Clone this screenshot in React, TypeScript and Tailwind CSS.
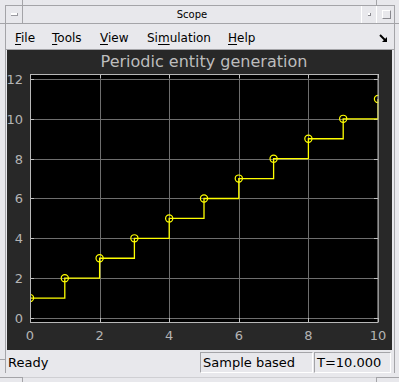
import React from "react";

const X = (v: number) => 23 + 34.8 * v;
const Y = (v: number) => 244 - 19.917 * v;

function Chart() {
  const xs = [0, 2, 4, 6, 8, 10];
  const ys = [0, 2, 4, 6, 8, 10, 12];
  let d = `M ${X(0)} ${Y(1)}`;
  for (let k = 1; k <= 10; k++) {
    d += ` H ${X(k)} V ${Y(k + 1)}`;
  }
  const pts = Array.from({ length: 11 }, (_, k) => k);
  return (
    <svg width={385} height={276} className="block" style={{ fontFamily: "'DejaVu Sans', sans-serif" }}>
      <defs>
        <clipPath id="ax">
          <rect x={23.5} y={0.5} width={348} height={248} />
        </clipPath>
      </defs>
      <rect x={23.5} y={0.5} width={348} height={248} fill="#000" />
      {xs.map((v) => (
        <line key={"gx" + v} x1={Math.round(X(v)) + 0.5} x2={Math.round(X(v)) + 0.5} y1={0} y2={248} stroke="#6e6e6e" strokeWidth={1} />
      ))}
      {ys.map((v) => (
        <line key={"gy" + v} x1={23} x2={371} y1={Math.round(Y(v)) + 0.5} y2={Math.round(Y(v)) + 0.5} stroke="#6e6e6e" strokeWidth={1} />
      ))}
      {ys.map((v) => (
        <g key={"ty" + v}>
          <line x1={23} x2={27} y1={Math.round(Y(v)) + 0.5} y2={Math.round(Y(v)) + 0.5} stroke="#c0c0c0" />
          <line x1={367} x2={371} y1={Math.round(Y(v)) + 0.5} y2={Math.round(Y(v)) + 0.5} stroke="#c0c0c0" />
        </g>
      ))}
      {xs.map((v) => (
        <g key={"tx" + v}>
          <line x1={Math.round(X(v)) + 0.5} x2={Math.round(X(v)) + 0.5} y1={244} y2={248} stroke="#c0c0c0" />
          <line x1={Math.round(X(v)) + 0.5} x2={Math.round(X(v)) + 0.5} y1={0} y2={4} stroke="#c0c0c0" />
        </g>
      ))}
      <g clipPath="url(#ax)">
        <path d={d} fill="none" stroke="#ffff00" strokeWidth={1.3} />
        {pts.map((k) => (
          <circle key={k} cx={X(k)} cy={Y(k + 1)} r={3.6} fill="none" stroke="#ffff00" strokeWidth={1.2} />
        ))}
      </g>
      <rect x={23.5} y={0.5} width={347.5} height={248} fill="none" stroke="#b8b8b8" strokeWidth={1} />
      {ys.map((v) => (
        <text key={"ly" + v} x={16} y={Y(v) + 5} textAnchor="end" fontSize={13} fill="#b4b4b4">
          {v}
        </text>
      ))}
      {xs.map((v) => (
        <text key={"lx" + v} x={X(v)} y={266} textAnchor="middle" fontSize={13} fill="#b4b4b4">
          {v}
        </text>
      ))}
    </svg>
  );
}

function Line({ className }: { className: string }) {
  return <div className={"absolute pointer-events-none " + className} />;
}

export default function App() {
  return (
    <div className="relative w-[399px] h-[382px] overflow-hidden bg-[#e8e8ec] text-black font-['DejaVu_Sans',sans-serif]">
      <div className="pl-[5px] pt-[5px]">
        <div className="w-[390px] h-[368px] border-l border-t border-r border-[#a4a4a8] flex flex-col">
          {/* title bar */}
          <div className="h-[18px] flex border-b border-[#a4a4a8]">
            <div className="w-[17px] border-r border-[#a4a4a8] flex items-center justify-center">
              <div className="w-[7px] h-[3px] bg-white border-b border-r border-[#9a9aa0] mt-[-1px]" />
            </div>
            <div className="flex-1 text-center text-[10px] leading-[17px]">Scope</div>
            <div className="w-[16px] border-l border-white border-r border-[#a4a4a8] flex items-center justify-center">
              <div className="w-[3px] h-[3px] bg-white border-b border-r border-[#8a8a90] mt-[-1px]" />
            </div>
            <div className="w-[17px] flex items-center justify-center">
              <div className="w-[9px] h-[9px] border-t border-l border-white border-b border-r border-b-[#8a8a90] border-r-[#8a8a90] mt-[-1px] ml-[1px]" />
            </div>
          </div>
          {/* menu bar */}
          <div className="h-[26px] flex border-b border-[#a4a4a8] pl-[9px] pt-[7px] text-[12px] leading-[14px]">
            <span className="w-[37px]"><span className="underline underline-offset-2">F</span>ile</span>
            <span className="w-[48px]"><span className="underline underline-offset-2">T</span>ools</span>
            <span className="w-[47px]"><span className="underline underline-offset-2">V</span>iew</span>
            <span className="w-[81px]">Si<span className="underline underline-offset-2">m</span>ulation</span>
            <span className="flex-1"><span className="underline underline-offset-2">H</span>elp</span>
            <svg width="9" height="9" viewBox="0 0 9 9" className="mt-[3px] mr-[6px]">
              <line x1="1" y1="1" x2="6" y2="6" stroke="#000" strokeWidth="2" />
              <polygon points="8,3 8,8 3,8" fill="#000" />
            </svg>
          </div>
          {/* plot panel */}
          <div className="ml-[1px] w-[385px] h-[300px] bg-[#282828] flex flex-col">
            <div className="h-[24px] pl-[9px] text-center text-[16px] leading-[24px] text-[#bdbdbd]">
              Periodic entity generation
            </div>
            <Chart />
          </div>
          {/* status bar */}
          <div className="flex items-start pt-[2px] pr-[3px] text-[13px]">
            <div className="flex-1 pl-[2px] mt-[1px] leading-[19px]">Ready</div>
            <div className="w-[113px] h-[21px] border border-t-[#a4a4a8] border-l-[#a4a4a8] border-b-white border-r-white pl-[2px] leading-[19px]">
              Sample based
            </div>
            <div className="w-[77px] ml-[1px] h-[21px] border border-t-[#a4a4a8] border-l-[#a4a4a8] border-b-white border-r-white pl-[2px] leading-[19px]">
              T=10.000
            </div>
          </div>
        </div>
      </div>
      {/* frame handle decorations */}
      <Line className="left-[22px] top-0 w-px h-[5px] bg-[#a4a4a8]" />
      <Line className="left-0 top-[23px] w-[5px] h-px bg-[#a4a4a8]" />
      <Line className="left-[376px] top-0 w-px h-[5px] bg-[#a4a4a8]" />
      <Line className="left-[395px] top-[23px] w-[4px] h-px bg-[#a4a4a8]" />
      <Line className="left-0 top-[359px] w-[5px] h-px bg-[#a4a4a8]" />
      <Line className="left-[22px] top-[377px] w-[354px] h-px bg-[#cfcfd3]" />
      <Line className="left-0 top-[377px] w-[22px] h-px bg-[#a4a4a8]" />
      <Line className="left-[376px] top-[377px] w-[23px] h-px bg-[#a4a4a8]" />
      <Line className="left-[22px] top-[377px] w-px h-[5px] bg-[#a4a4a8]" />
      <Line className="left-[376px] top-[377px] w-px h-[5px] bg-[#a4a4a8]" />
    </div>
  );
}
